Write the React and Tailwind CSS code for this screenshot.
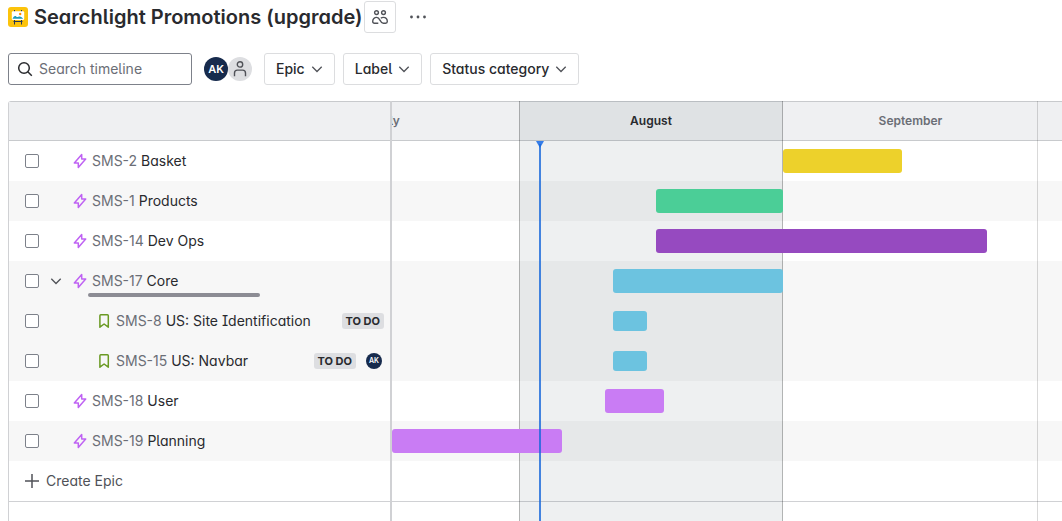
import React from "react";

const rows = [
  { key: "SMS-2", name: "Basket", bar: "left-[391px] w-[119px] bg-[#edd12b]" },
  { key: "SMS-1", name: "Products", striped: true, bar: "left-[264px] w-[127px] bg-[#4bce97]" },
  { key: "SMS-14", name: "Dev Ops", bar: "left-[264px] w-[331px] bg-[#964ac0]" },
  { key: "SMS-17", name: "Core", striped: true, expanded: true, bar: "left-[221px] w-[170px] bg-[#6cc3e0]" },
  { key: "SMS-8", name: "US: Site Identification", striped: true, child: true, bar: "left-[221px] w-[34px] bg-[#6cc3e0]" },
  { key: "SMS-15", name: "US: Navbar", striped: true, child: true, assignee: "AK", bar: "left-[221px] w-[34px] bg-[#6cc3e0]" },
  { key: "SMS-18", name: "User", bar: "left-[213px] w-[59px] bg-[#c97cf4]" },
  { key: "SMS-19", name: "Planning", striped: true, bar: "left-0 w-[170px] bg-[#c97cf4]" },
];

function Chevron() {
  return (
    <svg className="size-4 shrink-0" viewBox="0 0 16 16" fill="none" stroke="#505258" strokeWidth="1.3" aria-hidden="true">
      <path d="M3.3 5.8 8 10.5l4.7-4.7" />
    </svg>
  );
}

function EpicIcon() {
  return (
    <svg className="size-4 shrink-0 text-[#bf63f3]" viewBox="0 0 16 16" fill="none" stroke="currentColor" strokeWidth="1.5" strokeLinejoin="round" aria-hidden="true">
      <path d="M9.700 1.500V6h4L6.300 14.500V10H2.300z" />
    </svg>
  );
}

function StoryIcon() {
  return (
    <svg className="size-4 shrink-0 text-[#6a9a23]" viewBox="0 0 16 16" fill="none" stroke="currentColor" strokeWidth="1.5" strokeLinejoin="round" aria-hidden="true">
      <path d="M3.900 2.700c0-.5.4-.9.9-.9h6.600c.5 0 .9.4.9.9v11.500L8.100 11 3.900 14.200z" />
    </svg>
  );
}

function ProjectLogo() {
  return (
    <svg className="size-5 shrink-0" viewBox="0 0 20 20" aria-hidden="true">
      <rect width="20" height="20" rx="3" fill="#fcc30b" />
      <path d="M6.500 3v2M13.500 3v2M6.500 12v5.500M13.500 12v5.500" stroke="#253858" strokeWidth="1" />
      <path d="M5.500 14.500h9" stroke="#253858" strokeWidth="1" />
      <rect x="3.800" y="4.300" width="12.400" height="8.700" rx="1.200" fill="#fff" />
      <path d="M4.500 11.800c1-2.300 2.300-3.500 3.700-2.400.8.7 1.300.8 2.200.3 1.700-.9 3.700.3 4.800 2.100z" fill="#1d9aba" />
      <circle cx="12.200" cy="7" r="1.200" fill="#ff8b00" />
    </svg>
  );
}

function FilterButton({ children }) {
  return (
    <button type="button" className="flex h-8 items-center gap-1 rounded-[3px] border border-[#dcdddf] pr-[9px] pl-[11px] text-sm font-medium">
      {children}
      <Chevron />
    </button>
  );
}

function IssueRow({ row }) {
  return (
    <li className={`flex h-10 items-center pl-4 ${row.striped ? "bg-[#f7f7f7]" : "bg-white"}`}>
      <input
        type="checkbox"
        aria-label={`Select ${row.key}`}
        className="size-3.5 shrink-0 appearance-none rounded-[2px] border border-[#7d818a] bg-white checked:bg-blue-600"
      />
      <span className={`flex shrink-0 justify-center ${row.child ? "w-[57px]" : "w-[33px]"}`}>
        {row.expanded && (
          <button type="button" aria-label={`Collapse ${row.key}`}>
            <Chevron />
          </button>
        )}
      </span>
      {row.child ? <StoryIcon /> : <EpicIcon />}
      <a href={`#${row.key}`} className="ml-1 grow truncate text-sm">
        <span className="text-[#6b6e76]">{row.key}</span> {row.name}
      </a>
      {row.child && (
        <span className="mr-1.5 rounded-[3px] bg-[#dddee1] px-1 text-[11px] leading-4 font-bold">TO DO</span>
      )}
      {row.assignee && (
        <span className="mr-2 ml-1 flex size-4 items-center justify-center rounded-full bg-[#172b4d] text-[7px] font-semibold text-white">
          {row.assignee}
        </span>
      )}
    </li>
  );
}

export default function App() {
  return (
    <div className="flex h-screen flex-col overflow-hidden bg-white pl-2 font-[Inter,'Liberation_Sans',sans-serif] text-[#292a2e] [font-feature-settings:'cv05','cv08','cv11']">
      <header className="mt-px flex h-8 shrink-0 items-center">
        <ProjectLogo />
        <h1 className="ml-1.5 text-xl font-semibold">Searchlight Promotions (upgrade)</h1>
        <button type="button" aria-label="Team" className="ml-0.5 flex size-8 items-center justify-center rounded-[3px] border border-[#dcdddf] text-[#505258]">
          <svg className="size-4" viewBox="0 0 16 16" fill="none" stroke="currentColor" strokeWidth="1.4" aria-hidden="true">
            <circle cx="4.500" cy="3.600" r="1.900" />
            <circle cx="11.500" cy="3.600" r="1.900" />
            <path d="M6.300 14.300H2.400c-1 0-1.700-.7-1.700-1.700C.7 10 2.400 8.400 4.700 8.400c3.600 0 3.200 5.900 6.600 5.900h2.300c1 0 1.700-.7 1.700-1.700 0-2.600-1.700-4.200-4-4.200-1 0-1.800.3-2.500.9" />
          </svg>
        </button>
        <button type="button" aria-label="More actions" className="ml-3 text-[#505258]">
          <svg className="h-4 w-5" viewBox="0 0 20 16" fill="currentColor" aria-hidden="true">
            <circle cx="3.500" cy="8" r="1.400" />
            <circle cx="10" cy="8" r="1.400" />
            <circle cx="16.500" cy="8" r="1.400" />
          </svg>
        </button>
      </header>

      <div className="mt-5 flex h-8 shrink-0 items-center">
        <label className="flex h-8 w-46 items-center rounded-[3px] border border-[#7d818a] pl-2">
          <svg className="size-4 shrink-0" viewBox="0 0 16 16" fill="none" stroke="currentColor" strokeWidth="1.5" aria-hidden="true">
            <circle cx="7" cy="7" r="5.300" />
            <path d="m10.800 10.800 4 4" />
          </svg>
          <input type="text" aria-label="Search timeline" placeholder="Search timeline" className="ml-1.5 w-full min-w-0 text-sm outline-none placeholder:text-[#6b6e76]" />
        </label>
        <div className="ml-3 flex">
          <span className="flex size-6 items-center justify-center rounded-full bg-[#172b4d] text-[11px] font-semibold text-white">AK</span>
          <span className="flex size-6 items-center justify-center rounded-full bg-[#dddee1] text-[#505258]">
            <svg className="size-4" viewBox="0 0 16 16" fill="none" stroke="currentColor" strokeWidth="1.400" aria-hidden="true">
              <circle cx="8" cy="3.400" r="2.700" />
              <path d="M2.500 15.200v-3.200c0-1.700 1.200-2.900 2.900-2.900h5.200c1.700 0 2.900 1.200 2.900 2.900v3.200" />
            </svg>
          </span>
        </div>
        <div className="ml-3 flex gap-2">
          <FilterButton>Epic</FilterButton>
          <FilterButton>Label</FilterButton>
          <FilterButton>Status category</FilterButton>
        </div>
      </div>

      <main className="mt-4 flex min-h-0 grow overflow-hidden rounded-tl-[3px] border-l border-[#d0d1d4]">
        <section aria-label="Issues" className="relative w-[383px] shrink-0 border-r-2 border-[#d0d1d4]">
          <div className="h-10 border-y border-[#c8cacd] bg-[#eff0f2]" />
          <ul>
            {rows.map((row) => (
              <IssueRow key={row.key} row={row} />
            ))}
          </ul>
          <div className="absolute top-48 left-[79px] h-1 w-43 rounded-full bg-[#8c8c94]" />
          <div className="h-[41px] border-b border-[#d0d1d4]">
            <button type="button" className="flex h-10 items-center gap-[7px] pl-4 text-sm text-[#505258]">
              <svg className="size-3.5" viewBox="0 0 14 14" fill="none" stroke="currentColor" strokeWidth="1.500" aria-hidden="true">
                <path d="M7 0v14M0 7h14" />
              </svg>
              Create Epic
            </button>
          </div>
        </section>

        <section aria-label="Timeline" className="relative flex min-w-0 grow flex-col overflow-hidden">
          <div className="flex h-10 shrink-0 items-center border-y border-[#c8cacd] bg-[#eff0f2] text-center text-xs font-semibold text-[#6b6e76]">
            <span className="-ml-34 w-[263px] shrink-0">July</span>
            <span className="w-[264px] shrink-0 text-[#292a2e]">August</span>
            <span className="w-[255px] shrink-0">September</span>
          </div>
          <div>
            {rows.map((row) => (
              <div key={row.key} className={`h-10 ${row.striped ? "bg-[#f7f7f7]" : "bg-white"}`} />
            ))}
            <div className="h-[41px] border-b border-[#d0d1d4]" />
          </div>
          <div className="absolute inset-0 flex">
            <div className="w-[127px] shrink-0" />
            <div className="w-[264px] shrink-0 border-x border-black/25 bg-[#0c2937]/7" />
            <div className="w-[255px] shrink-0 border-r border-black/15" />
          </div>
          <div className="absolute inset-x-0 top-10">
            {rows.map((row) => (
              <div key={row.key} className="relative h-10">
                <div className={`absolute rounded-[3px] ${row.child ? "top-2.5 h-5" : "top-2 h-6"} ${row.bar}`} />
              </div>
            ))}
          </div>
          <div className="absolute top-10 bottom-0 left-36 flex w-2 flex-col items-center">
            <svg className="h-[7px] w-2 shrink-0" viewBox="0 0 8 7" fill="#357de8" aria-hidden="true">
              <path d="M0 0h8L4 7z" />
            </svg>
            <div className="-mt-1 w-0.5 grow bg-[#1868db]/80" />
          </div>
        </section>
      </main>
    </div>
  );
}
